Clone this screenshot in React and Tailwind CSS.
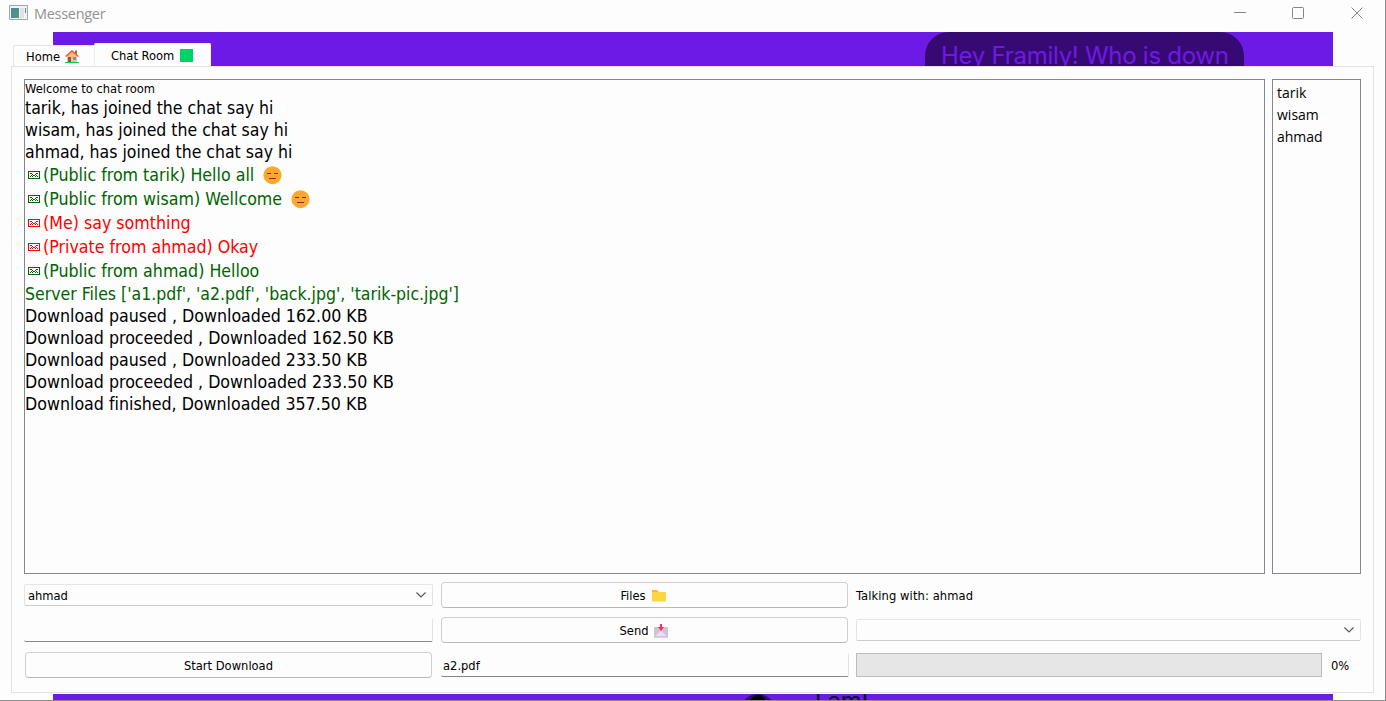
const UI = "font-['DejaVu_Sans_Condensed','DejaVu_Sans',sans-serif]";

function Envelope() {
  return (
    <svg className="mr-[3px] h-2 w-3 shrink-0" viewBox="0 0 12 8" fill="currentColor" shapeRendering="crispEdges">
      <path fillRule="evenodd" d="M0 0h12v8H0zM1 1v6h10V1z" />
      <path d="M2 2h2v1H2zM8 2h2v1H8zM4 3h1v1H4zM7 3h1v1H7zM5 4h2v1H5zM3 4h1v1H3zM8 4h1v1H8zM2 5h1v1H2zM9 5h1v1H9zM4 5h1v1H4zM7 5h1v1H7z" />
    </svg>
  );
}

function Face() {
  return (
    <svg className="ml-[9px] h-[19px] w-[19px] shrink-0" viewBox="0 0 19 19">
      <circle cx="9.5" cy="9.2" r="9" fill="#ffa72b" />
      <path d="M4 7.500h4M11 7.500h4M6 12.500h7" stroke="#5e3b1c" strokeWidth="1.2" />
    </svg>
  );
}

function House() {
  return (
    <svg className="-ml-px mt-px h-[13px] w-[14px]" viewBox="0 0 14 13">
      <path d="M2 6 7 1.500 12 6v6H2z" fill="#ffc078" />
      <path d="M10 .5h2v4l-2-2z" fill="#a0624a" />
      <path d="M.6 6.500 7 1l6.400 5.500" fill="none" stroke="#f4503c" strokeWidth="1.500" />
      <path d="M3 7h3v5H3z" fill="#8a5742" />
      <path d="M8 7h3v3H8z" fill="#4aa3df" />
      <path d="M0 12h14v1H0z" fill="#12c46b" />
    </svg>
  );
}

function Chevron() {
  return (
    <svg className="h-[6px] w-[10px]" viewBox="0 0 10 6" fill="none" stroke="#555" strokeWidth="1.100">
      <path d="m.5 .5 4.500 4.500L9.500 .5" />
    </svg>
  );
}

const messages = [
  { text: "(Public from tarik) Hello all", color: "text-[#006400]", face: true },
  { text: "(Public from wisam) Wellcome", color: "text-[#006400]", face: true },
  { text: "(Me) say somthing", color: "text-[#ff0000]" },
  { text: "(Private from ahmad) Okay", color: "text-[#ff0000]" },
  { text: "(Public from ahmad) Helloo", color: "text-[#006400]" },
];

const downloads = [
  "Download paused , Downloaded 162.00 KB",
  "Download proceeded , Downloaded 162.50 KB",
  "Download paused , Downloaded 233.50 KB",
  "Download proceeded , Downloaded 233.50 KB",
  "Download finished, Downloaded 357.50 KB",
];

function TitleBar() {
  return (
    <header className="flex h-8 shrink-0 items-start justify-between pl-[9px] pr-[22px]">
      <div className="flex pt-[5px]">
        <svg className="h-4 w-[19px]" viewBox="0 0 19 16">
          <defs>
            <linearGradient id="pane" x1="0" y1="0" x2="1" y2="1">
              <stop stopColor="#4a86a8" />
              <stop offset="1" stopColor="#4f9f72" />
            </linearGradient>
          </defs>
          <path d="M.5 .5h18v14H.5z" fill="#f2f2f2" stroke="#a3a7ab" />
          <path d="M2 3h8v10H2z" fill="url(#pane)" />
          <path d="M11 3h4v10h-4z" fill="#dfe1e3" />
          <path d="M16 3h1v5h-1z" fill="#5c8f9a" />
        </svg>
        <span className="ml-[6px] mt-[-1px] font-['Open_Sans',sans-serif] text-[14.500px] leading-5 tracking-[-0.3px] text-[#929292]">Messenger</span>
      </div>
      <svg className="h-[26px] w-[130px]" viewBox="0 0 130 26" fill="none" stroke="#858585">
        <path d="M1 12.500h12" />
        <rect x="59.500" y="7.500" width="11" height="11" rx="1" />
        <path d="m118.500 7.500 11 11m0-11-11 11" />
      </svg>
    </header>
  );
}

export default function App() {
  return (
    <div className={`flex h-[701px] w-[1386px] flex-col overflow-hidden border-b border-r border-[#8a8a8a] bg-[#fdfdfd] text-black ${UI}`}>
      <TitleBar />
      <main className="relative flex min-h-0 flex-1 flex-col px-[11px] pb-[7px] pt-[11px]">
        <div className="absolute inset-y-0 left-[53px] w-[1280px] overflow-hidden bg-[#6e1ae6]">
          <div className="absolute left-[872px] top-0 h-[60px] w-[319px] rounded-t-[24px] bg-[#370a73] pl-4 pt-[6px] font-['Inter',sans-serif] text-[24px] leading-9 tracking-[-0.27px] whitespace-nowrap text-[#6e1ae6]">Hey Framily! Who is down</div>
          <div className="absolute left-[687px] top-[662px] h-9 w-9 rounded-full bg-[#370a73]" />
          <div className="absolute left-[697px] top-[663px] h-4 w-4 rounded-full bg-black" />
          <div className="absolute left-[762px] top-[653px] font-['Inter',sans-serif] text-[24px] leading-8 tracking-[-0.3px] text-[#14052b]">I am!</div>
        </div>
        <div className="relative flex h-[23px] shrink-0 items-end pl-[2px] text-[12.800px]">
          <div className="-mr-px flex h-[21px] w-[82px] items-center gap-[6px] border border-b-0 border-[#e5e5e5] bg-[#fdfdfd] pl-3"><span className="pt-px">Home</span> <House /></div>
          <div className="flex h-[23px] w-[117px] items-center gap-[6px] rounded-t-[2px] border border-b-0 border-[#eeeeee] bg-[#fdfdfd] pl-4"><span className="pt-px">Chat Room</span> <span className="mt-px h-[13px] w-[13px] bg-[#00d26a]" /></div>
        </div>
        <section className="relative flex h-[627px] w-[1363px] flex-col border border-[#e3e3e3] bg-[#fdfdfd] px-3 pt-3 shadow-[0_1px_0_#fdfdfd]">
          <div className="flex h-[495px] shrink-0 gap-[7px]">
            <div className="w-[1241px] shrink-0 border border-[#828790] text-[17.500px] leading-[22px] whitespace-nowrap [font-variant-ligatures:none]">
              <p className="h-[17px] text-[12.800px] leading-[17px]">Welcome to chat room</p>
              <p>tarik, has joined the chat say hi</p>
              <p>wisam, has joined the chat say hi</p>
              <p>ahmad, has joined the chat say hi</p>
              {messages.map((m) => (
                <p key={m.text} className={`flex h-6 items-center pl-[3px] text-[17.650px] ${m.color}`}>
                  <Envelope />
                  <span>{m.text}</span>
                  {m.face && <Face />}
                </p>
              ))}
              <p className="text-[#006400]">Server Files ['a1.pdf', 'a2.pdf', 'back.jpg', 'tarik-pic.jpg']</p>
              {downloads.map((d) => <p key={d} className="text-[17.650px]">{d}</p>)}
            </div>
            <div className="w-[89px] shrink-0 border border-[#828790] pl-1 pt-[2px] font-['Open_Sans',sans-serif] text-[14px] leading-[22px]">
              <p>tarik</p>
              <p>wisam</p>
              <p>ahmad</p>
            </div>
          </div>
          <div className="mt-2 grid grid-cols-[409px_407px_505px] grid-rows-[26px_26px_26px] items-center gap-x-2 gap-y-[9px] text-[12.800px]">
            <div className="flex h-[22px] items-center justify-between rounded-[2px] border border-[#e5e5e5] border-b-[#cccccc] pl-[3px] pr-[6px]"><span className="pt-px">ahmad</span> <Chevron /></div>
            <button className="flex h-[26px] items-center justify-center gap-[6px] rounded-[4px] border border-[#d0d0d0] border-b-[#b8b8b8] pr-[3px]">
              <span className="pt-px">Files</span>
              <svg className="mt-px h-[13px] w-[14px]" viewBox="0 0 14 13"><path d="M0 1h5l2 2h6v4H0z" fill="#ffb02e" /><rect y="3" width="14" height="9.500" rx="1" fill="#fcd53f" /></svg>
            </button>
            <span className="pt-px tracking-[0.1px]">Talking with: ahmad</span>
            <div className="h-6 rounded-[2px] border-r border-b border-r-[#e5e5e5] border-b-[#868686]" />
            <button className="flex h-[26px] items-center justify-center gap-[5px] rounded-[4px] border border-[#d0d0d0] border-b-[#b8b8b8] pr-[2px]">
              <span className="pt-px">Send</span>
              <svg className="mt-px h-[14px] w-[14px]" viewBox="0 0 14 14"><path d="M0 3h14v10H0z" fill="#cdc4d6" /><path d="M0 13 7 7l7 6z" fill="#f3d8fa" /><path d="M0 12.500h14v1H0z" fill="#b4a9c4" /><path d="M6 0h2v3h2L7 7 4 3h2z" fill="#f8315f" /></svg>
            </button>
            <div className="flex h-[22px] items-center justify-end rounded-[2px] border border-[#e5e5e5] border-b-[#cccccc] pr-[6px]"><Chevron /></div>
            <button className="ml-px mr-px h-[26px] rounded-[4px] border border-[#d0d0d0] border-b-[#b8b8b8] pt-px">Start Download</button>
            <div className="flex h-6 w-[408px] items-center rounded-[2px] border-r border-b border-r-[#e5e5e5] border-b-[#868686] pl-[2px]"><span className="pt-[2px]">a2.pdf</span></div>
            <div className="flex items-center gap-[9px]"><div className="h-6 w-[466px] border border-[#bcbcbc] bg-[#e6e6e6]" /><span className="pt-px">0%</span></div>
          </div>
        </section>
      </main>
    </div>
  );
}
